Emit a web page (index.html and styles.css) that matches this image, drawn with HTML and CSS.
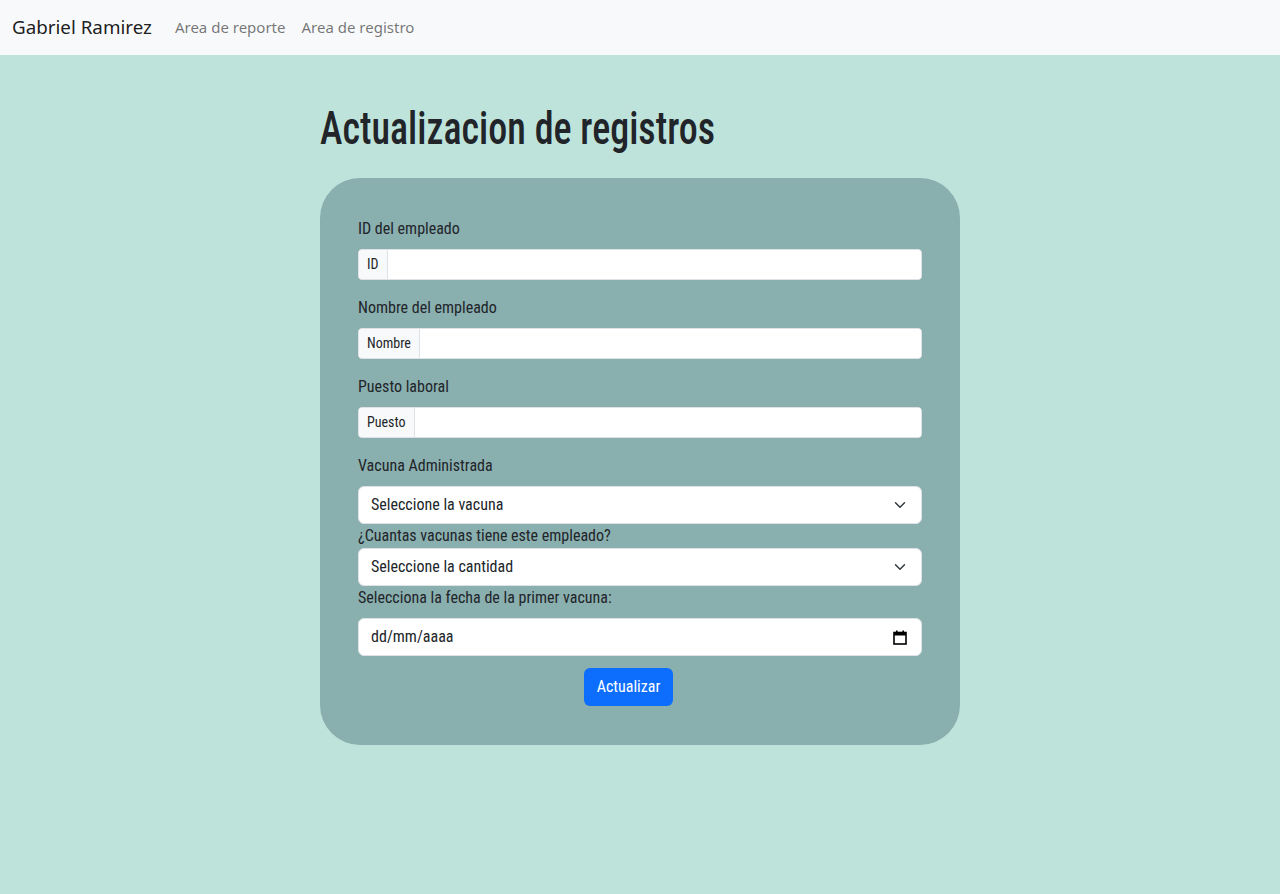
FILE: index.html
```html
<!DOCTYPE html>
<html lang="es">
<head>
<meta charset="utf-8">
<title>Actualizacion de registros</title>
<link rel="stylesheet" href="styles.css">
</head>
<body>
<nav class="navbar">
  <a class="brand" href="#">Gabriel Ramirez</a>
  <a class="nav-link" href="#">Area de reporte</a>
  <a class="nav-link" href="#">Area de registro</a>
</nav>
<main class="container">
  <h1 class="title">Actualizacion de registros</h1>
  <form class="card">
    <label class="form-label">ID del empleado</label>
    <div class="input-group">
      <span class="addon">ID</span>
      <input class="field" type="text">
    </div>
    <label class="form-label">Nombre del empleado</label>
    <div class="input-group">
      <span class="addon">Nombre</span>
      <input class="field" type="text">
    </div>
    <label class="form-label">Puesto laboral</label>
    <div class="input-group">
      <span class="addon">Puesto</span>
      <input class="field" type="text">
    </div>
    <label class="form-label">Vacuna Administrada</label>
    <div class="select">
      <span>Seleccione la vacuna</span>
      <svg class="chev" width="12" height="12" viewBox="0 0 16 16"><path d="M2 5l6 6 6-6" fill="none" stroke="#343a40" stroke-width="2" stroke-linecap="round" stroke-linejoin="round"/></svg>
    </div>
    <label class="form-label tight">¿Cuantas vacunas tiene este empleado?</label>
    <div class="select">
      <span>Seleccione la cantidad</span>
      <svg class="chev" width="12" height="12" viewBox="0 0 16 16"><path d="M2 5l6 6 6-6" fill="none" stroke="#343a40" stroke-width="2" stroke-linecap="round" stroke-linejoin="round"/></svg>
    </div>
    <label class="form-label">Selecciona la fecha de la primer vacuna:</label>
    <div class="select date">
      <span>dd/mm/aaaa</span>
      <svg class="cal" width="14" height="15" viewBox="0 0 14 15"><rect x="1" y="2.5" width="12" height="11.5" fill="none" stroke="#000" stroke-width="1.6"/><rect x="1" y="2.5" width="12" height="3" fill="#000"/><rect x="3" y="0.5" width="1.6" height="3" fill="#000"/><rect x="9.4" y="0.5" width="1.6" height="3" fill="#000"/></svg>
    </div>
    <div class="actions">
      <button class="btn" type="button">Actualizar</button>
    </div>
  </form>
</main>
</body>
</html>
```

FILE: styles.css
```css
* { box-sizing: border-box; }
html, body { margin: 0; }
body {
  background: #bee3db;
  font-family: "Roboto Condensed", "Roboto", sans-serif;
  font-stretch: condensed;
  color: #212529;
  font-size: 16px;
  line-height: 1.5;
}
.navbar {
  background: #f8f9fa;
  height: 55px;
  display: flex;
  align-items: center;
  padding: 0 12px;
  font-family: "Noto Sans", "Open Sans", sans-serif;
  font-stretch: normal;
}
.navbar a { text-decoration: none; }
.brand {
  font-size: 18.8px;
  color: rgba(0,0,0,.9);
  margin-right: 15px;
}
.nav-link {
  font-size: 15px;
  color: rgba(0,0,0,.55);
  padding: 0 8px;
}
.container {
  width: 640px;
  margin: 0 auto;
  padding-top: 46px;
}
.title {
  margin: 0 0 23px;
  font-size: 47px;
  line-height: 1.15;
  font-weight: 500;
  font-family: "Roboto Condensed", "DejaVu Sans Condensed", sans-serif;
  font-stretch: condensed;
  color: #212529;
  transform: scaleX(0.81);
  transform-origin: left center;
  white-space: nowrap;
}
.card {
  background: #8aafaf;
  border-radius: 40px;
  padding: 39px 38px 39px;
  display: flex;
  flex-direction: column;
}
.form-label {
  display: block;
  margin-bottom: 8px;
  line-height: 24px;
  color: #212529;
}
.form-label.tight { margin-bottom: 0; }
.input-group {
  display: flex;
  height: 31px;
  margin-bottom: 16px;
  background: #fff;
  border: 1px solid #dee2e6;
  border-radius: 4px;
  overflow: hidden;
}
.addon {
  background: #f8f9fa;
  border-right: 1px solid #dee2e6;
  padding: 0 8px;
  font-size: 14px;
  line-height: 29px;
}
.field {
  flex: 1;
  border: 0;
  outline: 0;
  background: #fff;
}
.select {
  display: flex;
  align-items: center;
  justify-content: space-between;
  height: 38px;
  background: #fff;
  border: 1px solid #dee2e6;
  border-radius: 6px;
  padding: 0 15px 0 12px;
  color: #212529;
}
.select.date { margin-bottom: 12px; padding-right: 14px; }
.actions {
  display: flex;
  justify-content: center;
  padding-right: 23px;
}
.btn {
  background: #0d6efd;
  color: #fff;
  border: 0;
  border-radius: 6px;
  height: 38px;
  padding: 0 13px;
  font: inherit;
  font-stretch: condensed;
}
```
